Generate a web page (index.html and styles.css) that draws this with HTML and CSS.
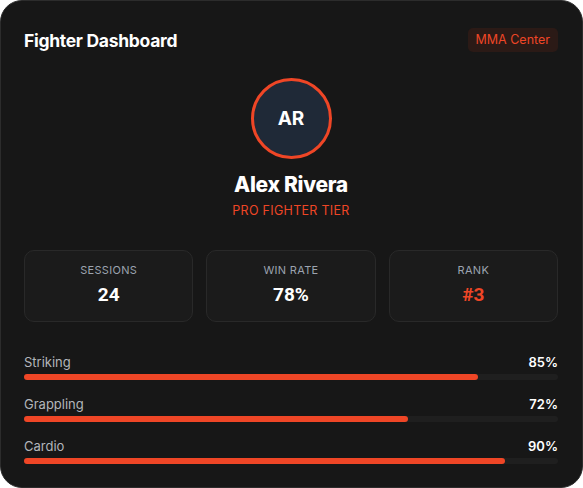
FILE: index.html
```html
<!DOCTYPE html>
<html>
<head>
<meta charset="utf-8">
<link rel="stylesheet" href="styles.css">
</head>
<body>
<div class="card">
  <div class="header">
    <h1 class="title">Fighter Dashboard</h1>
    <span class="badge">MMA Center</span>
  </div>
  <div class="profile">
    <div class="avatar">AR</div>
    <div class="name">Alex Rivera</div>
    <div class="tier">PRO FIGHTER TIER</div>
  </div>
  <div class="stats">
    <div class="stat"><div class="stat-label">SESSIONS</div><div class="stat-value">24</div></div>
    <div class="stat"><div class="stat-label">WIN RATE</div><div class="stat-value">78%</div></div>
    <div class="stat"><div class="stat-label">RANK</div><div class="stat-value accent">#3</div></div>
  </div>
  <div class="skills">
    <div class="skill">
      <div class="skill-row"><span class="skill-name">Striking</span><span class="skill-pct">85%</span></div>
      <div class="track"><div class="fill" style="width:85%"></div></div>
    </div>
    <div class="skill">
      <div class="skill-row"><span class="skill-name">Grappling</span><span class="skill-pct">72%</span></div>
      <div class="track"><div class="fill" style="width:72%"></div></div>
    </div>
    <div class="skill">
      <div class="skill-row"><span class="skill-name">Cardio</span><span class="skill-pct">90%</span></div>
      <div class="track"><div class="fill" style="width:90%"></div></div>
    </div>
  </div>
</div>
</body>
</html>
```
FILE: styles.css
```css
* { box-sizing: border-box; }
html, body { margin: 0; padding: 0; background: #ffffff; }
body { font-family: "Inter", "Liberation Sans", sans-serif; }
.card {
  width: 583px;
  height: 488px;
  background: #171717;
  border: 1px solid #2c2c2c;
  border-radius: 22px;
  padding: 23px 24px 23px 23px;
  display: flex;
  flex-direction: column;
}
.card > * { flex-shrink: 0; }
.header {
  display: flex;
  align-items: center;
  justify-content: space-between;
  height: 32px;
}
.title {
  margin: 0;
  color: #ffffff;
  font-family: "Inter", sans-serif;
  font-weight: 700;
  font-size: 17.5px;
  letter-spacing: -0.3px;
}
.badge {
  background: #2b1a16;
  color: #ef4626;
  font-size: 12.5px;
  line-height: 24px;
  padding: 0 8px;
  border-radius: 5px;
}
.profile {
  margin-top: 22px;
  display: flex;
  flex-direction: column;
  align-items: center;
}
.avatar {
  width: 81px;
  height: 81px;
  border-radius: 50%;
  border: 3px solid #ef4626;
  background: #1f2937;
  color: #ffffff;
  font-weight: 700;
  font-size: 19px;
  display: flex;
  align-items: center;
  justify-content: center;
}
.name {
  margin-top: 11px;
  color: #ffffff;
  font-weight: 800;
  font-size: 21px;
  line-height: 30px;
  letter-spacing: -0.3px;
}
.tier {
  margin-top: 2px;
  color: #ef4626;
  font-size: 12.5px;
  line-height: 18px;
  letter-spacing: 0.3px;
}
.stats {
  margin-top: 30px;
  display: grid;
  grid-template-columns: repeat(3, 1fr);
  gap: 13px;
}
.stat {
  background: #1b1b1b;
  border: 1px solid #292929;
  border-radius: 10px;
  padding: 12px 8px;
  text-align: center;
}
.stat-label {
  color: #9ca3af;
  font-size: 11px;
  line-height: 14px;
  letter-spacing: 0.3px;
}
.stat-value {
  margin-top: 4px;
  color: #ffffff;
  font-family: "Roboto", sans-serif;
  font-weight: 700;
  font-size: 19px;
  line-height: 28px;
}
.accent { color: #ef4626; }
.skills {
  margin-top: 31px;
  display: flex;
  flex-direction: column;
  gap: 15px;
}
.skill-row {
  display: flex;
  justify-content: space-between;
  align-items: center;
  height: 18px;
  margin-bottom: 3px;
}
.skill-name { color: #b3b6bb; font-size: 13px; }
.skill-pct { color: #ffffff; font-size: 13px; font-weight: 600; }
.track {
  height: 6px;
  border-radius: 3px;
  background: #1f1f1f;
}
.fill {
  height: 100%;
  border-radius: 3px;
  background: #ef4626;
}
```
